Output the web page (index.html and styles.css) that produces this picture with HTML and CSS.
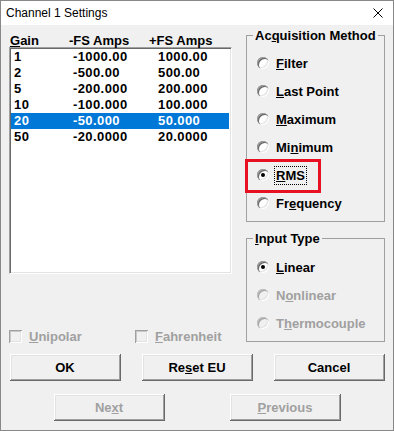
FILE: index.html
```html
<!doctype html>
<html lang="en">
<head>
    <meta charset="UTF-8">
    <title>Channel 1 Settings</title>
    <link rel="stylesheet" href="styles.css">
</head>
<body>
    <div class="window">
        <div class="titlebar">
            <span class="title">Channel 1 Settings</span>
            <svg class="close" width="10" height="10" viewBox="0 0 10 10">
                <path d="M0.5 0.5 L9.5 9.5 M9.5 0.5 L0.5 9.5" stroke="#000" stroke-width="1" fill="none"/>
            </svg>
        </div>
        <div class="dialog">
            <div class="top">
                <div class="gains">
                    <div class="gain-head">
                        <span><u>G</u>ain</span>
                        <span>-FS Amps</span>
                        <span>+FS Amps</span>
                    </div>
                    <div class="listbox">
                        <div class="row"><span>1</span><span>-1000.00</span><span>1000.00</span></div>
                        <div class="row"><span>2</span><span>-500.00</span><span>500.00</span></div>
                        <div class="row"><span>5</span><span>-200.000</span><span>200.000</span></div>
                        <div class="row"><span>10</span><span>-100.000</span><span>100.000</span></div>
                        <div class="row selected"><span>20</span><span>-50.000</span><span>50.000</span></div>
                        <div class="row"><span>50</span><span>-20.0000</span><span>20.0000</span></div>
                    </div>
                    <div class="checks">
                        <div class="check disabled"><span class="box"></span><span><u>U</u>nipolar</span></div>
                        <div class="check disabled"><span class="box"></span><span><u>F</u>ahrenheit</span></div>
                    </div>
                </div>
                <div class="groups">
                    <fieldset class="group acquisition">
                        <legend>Ac<u>q</u>uisition Method</legend>
                        <div class="option"><span class="radio"></span><span class="label"><u>F</u>ilter</span></div>
                        <div class="option"><span class="radio"></span><span class="label"><u>L</u>ast Point</span></div>
                        <div class="option"><span class="radio"></span><span class="label"><u>M</u>aximum</span></div>
                        <div class="option"><span class="radio"></span><span class="label">Mi<u>n</u>imum</span></div>
                        <div class="option marked"><span class="radio checked"></span><span class="label focus"><u>R</u>MS</span></div>
                        <div class="option"><span class="radio"></span><span class="label">Fr<u>e</u>quency</span></div>
                    </fieldset>
                    <fieldset class="group input-type">
                        <legend><u>I</u>nput Type</legend>
                        <div class="option"><span class="radio checked"></span><span class="label"><u>L</u>inear</span></div>
                        <div class="option disabled"><span class="radio"></span><span class="label">N<u>o</u>nlinear</span></div>
                        <div class="option disabled"><span class="radio"></span><span class="label">T<u>h</u>ermocouple</span></div>
                    </fieldset>
                </div>
            </div>
            <div class="buttons">
                <button>OK</button>
                <button>Re<u>s</u>et EU</button>
                <button>Cancel</button>
            </div>
            <div class="buttons nav">
                <button disabled>Ne<u>x</u>t</button>
                <button disabled><u>P</u>revious</button>
            </div>
        </div>
    </div>
</body>
</html>
```

FILE: styles.css
```css
html, body {
    margin: 0;
    padding: 0;
}

body {
    font-family: "Liberation Sans", Arial, sans-serif;
    font-size: 13px;
    font-weight: bold;
    background-color: #f0f0f0;
}

.window {
    width: 394px;
    height: 431px;
    box-sizing: border-box;
    border: 1px solid #888;
    background-color: #f0f0f0;
}

.titlebar {
    height: 24px;
    background-color: #fff;
    display: flex;
    align-items: center;
    justify-content: space-between;
    padding: 0 10px 0 5px;
}

.title {
    font-family: "Liberation Sans", Arial, sans-serif;
    font-weight: normal;
    font-size: 12px;
    color: #000;
}

.dialog {
    padding: 0 8px;
}

.top {
    display: grid;
    grid-template-columns: 223px 139px;
    column-gap: 14px;
}

/* gain list */
.gain-head {
    height: 22px;
    box-sizing: border-box;
    padding-top: 8px;
    line-height: 15px;
    display: grid;
    grid-template-columns: 59px 80px 1fr;
    padding-left: 1px;
}

.listbox {
    height: 227px;
    box-sizing: border-box;
    background-color: #fff;
    border-top: 1px solid #a0a0a0;
    border-left: 1px solid #a0a0a0;
    border-right: 1px solid #fff;
    border-bottom: 1px solid #fff;
    box-shadow: inset 1px 1px 0 #696969, inset -1px -1px 0 #e3e3e3;
    padding: 1px 2px 0 1px;
}

.row {
    height: 16px;
    line-height: 16px;
    display: grid;
    grid-template-columns: 59px 85px 1fr;
    padding-left: 3px;
    letter-spacing: 0.4px;
}

.row.selected {
    background-color: #0078d7;
    color: #fff;
}

.checks {
    display: flex;
    margin-top: 56px;
    height: 13px;
    line-height: 13px;
}

.check {
    display: flex;
    align-items: center;
    gap: 7px;
}

.check:first-child {
    width: 126px;
}

.box {
    width: 13px;
    height: 13px;
    box-sizing: border-box;
    background-color: #f0f0f0;
    box-shadow: inset 1px 1px 0 #a0a0a0, inset -1px -1px 0 #fff, inset 2px 2px 0 #c8c8c8, inset -2px -2px 0 #e3e3e3;
}

.disabled {
    color: #a0a0a0;
}

/* group boxes */
.groups {
    padding-top: 3px;
}

.group {
    margin: 0;
    border: 1px solid #a0a0a0;
    padding: 0 0 4px 6px;
    min-width: 0;
}

.group legend {
    padding: 0 2px;
    line-height: 15px;
}

.acquisition {
    padding-top: 6px;
}

.input-type {
    margin-top: 9px;
    padding-top: 7px;
}

.option {
    height: 28px;
    display: flex;
    align-items: center;
    padding-left: 4px;
    gap: 5px;
}

.option.marked {
    position: relative;
}

.option.marked::before {
    content: "";
    position: absolute;
    left: -8px;
    top: -2px;
    width: 76px;
    height: 34px;
    box-sizing: border-box;
    border: 3px solid #e81123;
}

.label {
    border: 1px dotted transparent;
    padding: 1px;
    line-height: 15px;
}

.label.focus {
    border-color: #000;
}

.radio {
    width: 12px;
    height: 12px;
    border-radius: 50%;
    background-color: #fff;
    box-shadow: inset 1px 1px 0 #a0a0a0, inset 2px 2px 0 #696969, inset -1px -1px 0 #fff, inset -2px -2px 0 #e3e3e3;
    position: relative;
    flex: none;
}

.option.disabled .radio {
    background-color: #f0f0f0;
    box-shadow: inset 1px 1px 0 #c0c0c0, inset 2px 2px 0 #a8a8a8, inset -1px -1px 0 #fff, inset -2px -2px 0 #e3e3e3;
}

.radio.checked::after {
    content: "";
    position: absolute;
    left: 4px;
    top: 4px;
    width: 4px;
    height: 4px;
    border-radius: 50%;
    background-color: #000;
}

/* buttons */
.buttons {
    display: flex;
    justify-content: center;
    gap: 21px;
    margin-top: 11px;
}

.buttons.nav {
    gap: 65px;
    margin-top: 13px;
}

button {
    width: 111px;
    height: 27px;
    font-family: "Liberation Sans", Arial, sans-serif;
    font-size: 13px;
    font-weight: bold;
    color: #000;
    background-color: #f0f0f0;
    border: none;
    padding: 0;
    box-shadow: inset -1px -1px 0 #696969, inset 1px 1px 0 #fff, inset -2px -2px 0 #a0a0a0, inset 2px 2px 0 #e3e3e3;
}

button:disabled {
    color: #a0a0a0;
}
```
